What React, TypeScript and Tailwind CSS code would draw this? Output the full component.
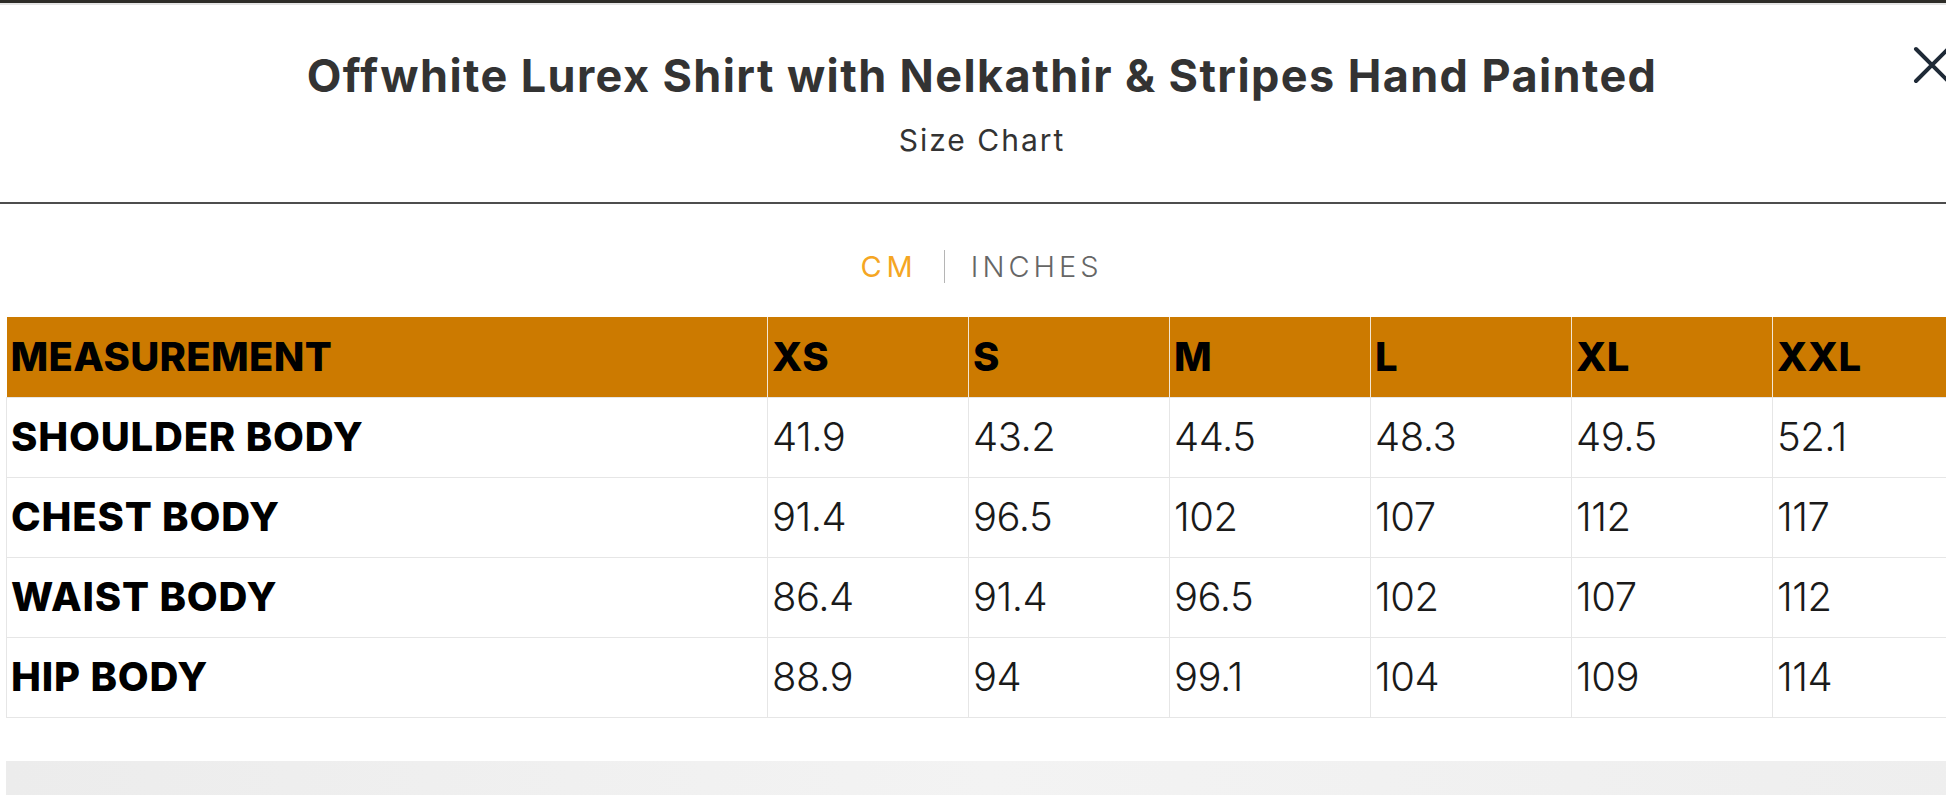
const SIZES = ["XS", "S", "M", "L", "XL", "XXL"];

const ROWS: { label: string; values: string[] }[] = [
  { label: "SHOULDER BODY", values: ["41.9", "43.2", "44.5", "48.3", "49.5", "52.1"] },
  { label: "CHEST BODY", values: ["91.4", "96.5", "102", "107", "112", "117"] },
  { label: "WAIST BODY", values: ["86.4", "91.4", "96.5", "102", "107", "112"] },
  { label: "HIP BODY", values: ["88.9", "94", "99.1", "104", "109", "114"] },
];

function CloseIcon() {
  return (
    <svg width="38" height="38" viewBox="0 0 38 38" fill="none">
      <path d="M3 3 L35 35 M35 3 L3 35" stroke="#1f2a37" strokeWidth="4" strokeLinecap="round" />
    </svg>
  );
}

export default function App() {
  return (
    <div className="relative h-[795px] w-full overflow-hidden bg-white font-['Inter','Liberation_Sans',sans-serif]">
      {/* strip of the page behind the modal */}
      <div className="h-[3px] w-full bg-[#2d2c28]" />
      <div className="h-[2px] w-full bg-[#e4e4e4]" />

      <div className="w-[1978px]">
        {/* Header */}
        <div className="relative flex h-[197px] flex-col items-center pr-[14px] pt-[48px]">
          <h2 className="text-[45px] font-bold leading-none tracking-[1.4px] text-[#333333]">
            Offwhite Lurex Shirt with Nelkathir &amp; Stripes Hand Painted
          </h2>
          <p className="mt-[27px] text-[30px] leading-none tracking-[2px] text-[#333333]">
            Size Chart
          </p>
          <button className="absolute left-[1913px] top-[41px]">
            <CloseIcon />
          </button>
        </div>
        <div className="h-[2px] w-full bg-[#4d4d4d]" />

        {/* Unit toggle */}
        <div className="flex h-[113px] items-center justify-center gap-[26px] pr-[15px] pt-[12px]">
          <span className="text-[29px] leading-none tracking-[5px] text-[#f5a623]">CM</span>
          <span className="h-[33px] w-px bg-[#b5b5b5]" />
          <span className="text-[29px] font-light leading-none tracking-[4px] text-[#666666]">
            INCHES
          </span>
        </div>

        {/* Table */}
        <div className="px-[6px]">
          <table className="w-[1966px] table-fixed border-collapse">
            <thead>
              <tr className="h-[80px] bg-[#cc7a00]">
                <th className="w-[761px] border-r border-[#f3e6d2] pl-[4px] text-left align-middle text-[40px] font-extrabold leading-none tracking-[0.3px] text-black">
                  MEASUREMENT
                </th>
                {SIZES.map((s) => (
                  <th
                    key={s}
                    className="w-[201px] border-r border-[#f3e6d2] pl-[4px] text-left align-middle text-[40px] font-extrabold leading-none tracking-[0.3px] text-black"
                  >
                    {s}
                  </th>
                ))}
              </tr>
            </thead>
            <tbody>
              {ROWS.map((row) => (
                <tr key={row.label} className="h-[80px]">
                  <td className="border border-[#e6e6e6] pl-[4px] align-middle text-[40px] font-extrabold leading-none tracking-[0.8px] text-black">
                    {row.label}
                  </td>
                  {row.values.map((v, i) => (
                    <td
                      key={i}
                      className="border border-[#e6e6e6] pl-[4px] align-middle text-[40px] font-light leading-none tracking-[-0.5px] text-[#1a1a1a]"
                    >
                      {v}
                    </td>
                  ))}
                </tr>
              ))}
            </tbody>
          </table>
        </div>

        {/* photo below the chart */}
        <div className="mx-[6px] mt-[43px] h-[40px] bg-gradient-to-r from-[#ececec] via-[#f3f3f3] to-[#eeeeee]" />
      </div>
    </div>
  );
}
